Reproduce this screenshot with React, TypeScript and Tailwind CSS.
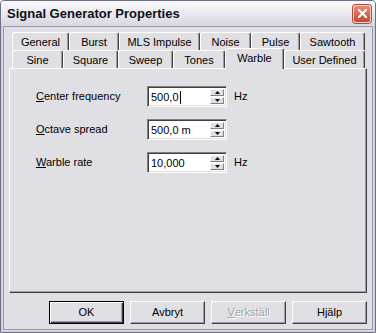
const font = "font-['Liberation_Sans',Arial,sans-serif]";

type TabDef = { label: string; w: string; selected?: boolean };

const row1: TabDef[] = [
  { label: "General", w: "w-[57px]" },
  { label: "Burst", w: "w-[50px]" },
  { label: "MLS Impulse", w: "w-[81px]" },
  { label: "Noise", w: "w-[51px]" },
  { label: "Pulse", w: "w-[49px]" },
  { label: "Sawtooth", w: "w-[65px]" },
];

const row2: TabDef[] = [
  { label: "Sine", w: "w-[51px]" },
  { label: "Square", w: "w-[55px]" },
  { label: "Sweep", w: "w-[55px]" },
  { label: "Tones", w: "w-[52px]" },
  { label: "Warble", w: "w-[59px]", selected: true },
  { label: "User Defined", w: "w-[81px]" },
];

function Tab({ label, w, selected }: TabDef) {
  if (selected) {
    return (
      <div
        className={`${w} relative z-10 -mt-[2px] -mb-[1px] h-[21px] rounded-t-[3px] border-l border-t border-white border-r border-r-[#404040] bg-[#e0dfe3] pt-[1px] text-center text-[11px] leading-[16px] text-black shadow-[inset_-1px_0_0_#9d9da1]`}
      >
        {label}
      </div>
    );
  }
  return (
    <div
      className={`${w} h-[18px] rounded-t-[3px] border-l border-t border-white border-r border-r-[#404040] bg-[#e0dfe3] pt-[1px] text-center text-[11px] leading-[16px] text-black shadow-[inset_-1px_0_0_#9d9da1]`}
    >
      {label}
    </div>
  );
}

function Arrow({ up }: { up?: boolean }) {
  return (
    <svg width="5" height="3" viewBox="0 0 5 3">
      <path d={up ? "M2.5 0 L5 3 L0 3 Z" : "M0 0 L5 0 L2.5 3 Z"} fill="#000" />
    </svg>
  );
}

function SpinField({ value, caret }: { value: string; caret?: boolean }) {
  return (
    <div className="flex h-[21px] w-[80px] border-l border-t border-[#7f7f7f] border-r border-b border-r-white border-b-white bg-white shadow-[inset_1px_1px_0_#404040,inset_-1px_-1px_0_#e0dfe3]">
      <div className="flex flex-1 items-center pl-[3px] pt-[1px] text-[11px] text-black">
        {value}
        {caret && <span className="ml-[1px] inline-block h-[13px] w-[1px] bg-black" />}
      </div>
      <div className="flex w-[16px] flex-col gap-[1px] py-[2px] pr-[2px]">
        <div className="flex h-[7px] items-center justify-center border-l border-t border-white border-r border-b border-r-[#808080] border-b-[#808080] bg-[#e0dfe3]">
          <Arrow up />
        </div>
        <div className="flex h-[7px] items-center justify-center border-l border-t border-white border-r border-b border-r-[#808080] border-b-[#808080] bg-[#e0dfe3]">
          <Arrow />
        </div>
      </div>
    </div>
  );
}

function Button({
  children,
  isDefault,
  disabled,
}: {
  children: React.ReactNode;
  isDefault?: boolean;
  disabled?: boolean;
}) {
  return (
    <div
      className={`flex h-[23px] w-[75px] items-center justify-center bg-[#e0dfe3] text-[11px] ${
        isDefault
          ? "border border-black shadow-[inset_1px_1px_0_#fff,inset_-1px_-1px_0_#404040,inset_-2px_-2px_0_#9d9da1]"
          : "border-l border-t border-white border-r border-b border-r-[#404040] border-b-[#404040] shadow-[inset_-1px_-1px_0_#9d9da1]"
      } ${disabled ? "text-[#a3a3a6] [text-shadow:1px_1px_0_#fff]" : "text-black"}`}
    >
      {children}
    </div>
  );
}

export default function App() {
  return (
    <div
      className={`${font} flex h-[333px] w-[376px] flex-col overflow-hidden rounded-t-[4px] border border-[#6e6e82] bg-[#d3d3de]`}
    >
      {/* title bar */}
      <div className="flex h-[25px] items-center justify-between bg-gradient-to-b from-[#fbfbfd] to-[#d7d7e1] pl-[6px] pr-[4px]">
        <span className="text-[13px] font-bold text-[#101018]">Signal Generator Properties</span>
        <div className="flex h-[18px] w-[18px] items-center justify-center rounded-[3px] border border-[#f4d0c8] bg-gradient-to-b from-[#e98a72] to-[#c8452f] shadow-[0_0_0_1px_#b04a3a]">
          <svg width="9" height="9" viewBox="0 0 9 9">
            <path d="M1 1 L8 8 M8 1 L1 8" stroke="#fff" strokeWidth="2" strokeLinecap="square" />
          </svg>
        </div>
      </div>

      {/* body */}
      <div className="flex flex-1 flex-col border-x-[2px] border-b-[2px] border-[#d3d3de]">
        <div className="flex flex-1 flex-col border border-[#9a9aab] bg-[#e0dfe3] pt-[5px]">
          {/* tabs */}
          <div className="ml-[8px] flex">
            {row1.map((t) => (
              <Tab key={t.label} {...t} />
            ))}
          </div>
          <div className="ml-[8px] flex items-start">
            {row2.map((t) => (
              <Tab key={t.label} {...t} />
            ))}
          </div>

          {/* panel */}
          <div className="mx-[5px] h-[225px] w-[358px] border-l border-t border-white border-r border-b border-r-[#404040] border-b-[#404040] pl-[26px] pt-[17px] shadow-[inset_-1px_-1px_0_#9d9da1]">
            <div className="grid grid-cols-[111px_80px_auto] items-center gap-y-[12px] text-[11px] text-black">
              <span>
                <span className="underline">C</span>enter frequency
              </span>
              <SpinField value="500,0" caret />
              <span className="pl-[7px]">Hz</span>

              <span>
                <span className="underline">O</span>ctave spread
              </span>
              <SpinField value="500,0 m" />
              <span />

              <span>
                <span className="underline">W</span>arble rate
              </span>
              <SpinField value="10,000" />
              <span className="pl-[7px]">Hz</span>
            </div>
          </div>

          {/* buttons */}
          <div className="mt-[8px] flex justify-end gap-[6px] pr-[5px]">
            <Button isDefault>OK</Button>
            <Button>Avbryt</Button>
            <Button disabled>
              <span className="underline">V</span>erkställ
            </Button>
            <Button>Hjälp</Button>
          </div>
        </div>
      </div>
    </div>
  );
}
